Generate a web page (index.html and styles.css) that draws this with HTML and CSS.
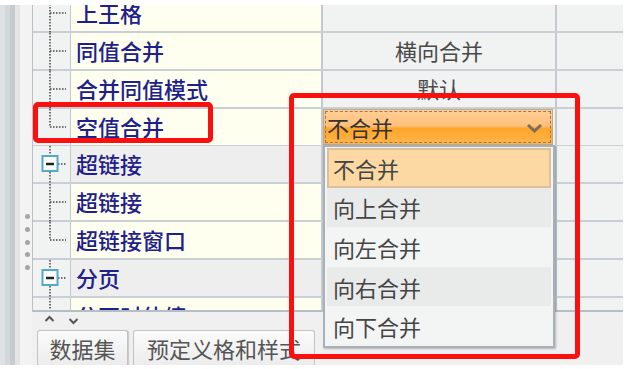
FILE: index.html
```html
<!DOCTYPE html>
<html>
<head>
	<meta charset="UTF-8">
	<title>单元格属性</title>
	<link rel="stylesheet" href="styles.css">
</head>
<body>
	<div class="app">
		<div class="rail">
			<span class="grip"></span>
			<span class="grip"></span>
			<span class="grip"></span>
			<span class="grip"></span>
			<span class="grip"></span>
		</div>
		<div class="main">
			<div class="grid">
				<div class="rows">
					<div class="row">
						<div class="tree"><svg width="37" height="36"><path class="dot" d="M17 0V38M17 18H33"/></svg></div>
						<div class="label">上王格</div>
						<div class="value"></div>
						<div class="extra"></div>
					</div>
					<div class="row">
						<div class="tree"><svg width="37" height="36"><path class="dot" d="M17 0V38M17 18H33"/></svg></div>
						<div class="label">同值合并</div>
						<div class="value">横向合并</div>
						<div class="extra"></div>
					</div>
					<div class="row">
						<div class="tree"><svg width="37" height="36"><path class="dot" d="M17 0V38M17 18H33"/></svg></div>
						<div class="label">合并同值模式</div>
						<div class="value">默认</div>
						<div class="extra"></div>
					</div>
					<div class="row">
						<div class="tree"><svg width="37" height="36"><path class="dot" d="M17 0V18M17 18H33"/></svg></div>
						<div class="label">空值合并</div>
						<div class="value">
							<div class="combo">
								<div class="combo-in">
									<span>不合并</span>
									<svg width="17" height="10"><path d="M2 2L8.5 8L15 2" fill="none" stroke="#7b6d5d" stroke-width="3"/></svg>
								</div>
							</div>
						</div>
						<div class="extra"></div>
					</div>
					<div class="row group">
						<div class="tree"><svg width="37" height="36"><path class="dot" d="M17 0V10M17 26V38M25 18H33"/><rect class="box" x="9.5" y="10" width="15" height="15"/><path d="M13 18H21" stroke="#222" stroke-width="2.5"/></svg></div>
						<div class="label">超链接</div>
						<div class="value"></div>
						<div class="extra"></div>
					</div>
					<div class="row">
						<div class="tree"><svg width="37" height="36"><path class="dot" d="M17 0V38M17 18H33"/></svg></div>
						<div class="label">超链接</div>
						<div class="value"></div>
						<div class="extra"></div>
					</div>
					<div class="row">
						<div class="tree"><svg width="37" height="36"><path class="dot" d="M17 0V18M17 18H33"/></svg></div>
						<div class="label">超链接窗口</div>
						<div class="value"></div>
						<div class="extra"></div>
					</div>
					<div class="row group">
						<div class="tree"><svg width="37" height="36"><path class="dot" d="M17 0V10M17 26V38M25 18H33"/><rect class="box" x="9.5" y="10" width="15" height="15"/><path d="M13 18H21" stroke="#222" stroke-width="2.5"/></svg></div>
						<div class="label">分页</div>
						<div class="value"></div>
						<div class="extra"></div>
					</div>
					<div class="row">
						<div class="tree"><svg width="37" height="36"><path class="dot" d="M17 0V38"/></svg></div>
						<div class="label">分页时伸缩</div>
						<div class="value"></div>
						<div class="extra"></div>
					</div>
				</div>
			</div>
			<div class="foot">
				<div class="arrows">
					<svg width="11" height="7"><path d="M1.5 6L5.5 2L9.5 6" fill="none" stroke="#555" stroke-width="2"/></svg>
					<svg width="11" height="9" class="down"><path d="M1.5 3L5.5 7L9.5 3" fill="none" stroke="#555" stroke-width="2"/></svg>
				</div>
				<div class="tabs">
					<div class="tab tab-a">数据集</div>
					<div class="tab tab-b">预定义格和样式</div>
				</div>
			</div>
		</div>
	</div>

	<!-- 下拉选项 -->
	<div class="popup">
		<div class="opt sel">不合并</div>
		<div class="opt alt">向上合并</div>
		<div class="opt">向左合并</div>
		<div class="opt alt">向右合并</div>
		<div class="opt">向下合并</div>
	</div>

	<!-- 红框标注 -->
	<div class="mark mark-a"></div>
	<div class="mark mark-b"></div>
</body>
</html>
```

FILE: styles.css
```css
* { box-sizing: border-box; }
body {
	margin: 0;
	background: #fff;
	font-family: "Noto Sans CJK SC", "Noto Sans", sans-serif;
}
.app {
	display: flex;
	width: 623px;
	height: 360px;
	margin-top: 5px;
}
.rail {
	width: 32px;
	flex: none;
	display: flex;
	flex-direction: column;
	align-items: flex-end;
	gap: 7.8px;
	padding: 209px 2.5px 0 0;
	background: linear-gradient(to right,
		#dde1e4 0, #dde1e4 5px,
		#d3d8dc 5px, #d3d8dc 10px,
		#c7cbd0 10px, #c7cbd0 15px,
		#e3e4e6 15px, #e3e4e6 20px,
		#f3f3f3 20px);
}
.grip {
	width: 5px;
	height: 5px;
	border-radius: 50%;
	background: #a6a6a6;
}
.main {
	flex: 1;
	display: flex;
	flex-direction: column;
}
.grid {
	height: 307px;
	flex: none;
	overflow: hidden;
	border-left: 1px solid #b8c0c8;
	border-bottom: 2px solid #b6bec5;
}
.rows { margin-top: -9.8px; }
.row {
	display: grid;
	grid-template-columns: 37px 252px 233px 68px;
	height: 37.8px;
	border-bottom: 2px solid #c8d0d5;
}
.tree { background: #f1f2f2; }
.tree svg { display: block; overflow: visible; }
.dot {
	fill: none;
	stroke: #444;
	stroke-width: 1.5;
	stroke-dasharray: 1.5 1.5;
}
.box {
	fill: #fff;
	stroke: #52aacb;
	stroke-width: 2;
}
.label {
	background: #fffff0;
	border-left: 1px solid #c2cad0;
	padding-left: 5px;
	color: #20208a;
	font-size: 22px;
	font-weight: 500;
	line-height: 35.8px;
	white-space: nowrap;
}
.row.group .label { background: #eeeeee; }
.value {
	background: #f1f2f2;
	border-left: 2px solid #c2cad0;
	text-align: center;
	color: #4a4a4a;
	font-size: 22px;
	line-height: 35.8px;
	white-space: nowrap;
	margin-left: -1px;
}
.extra {
	background: #f1f2f2;
	border-left: 2px solid #c2cad0;
}
.combo {
	height: 100%;
	margin-right: 2px;
	padding: 1px;
	border: 1px solid #c9a77a;
	background: linear-gradient(#ffcf96, #ffc07a 47%, #ffa52a 54%, #ffb44c);
	display: flex;
}
.combo-in {
	flex: 1;
	border: 1px dashed #8d7c64;
	display: flex;
	align-items: center;
	justify-content: space-between;
	padding: 0 7px 0 1px;
	color: #333;
	text-align: left;
	line-height: 1;
}
.combo-in svg { display: block; margin-top: 2px; }
.foot {
	flex: 1;
	background: #f0f0f0;
}
.arrows {
	height: 14px;
	display: flex;
	align-items: flex-start;
	gap: 13px;
	padding: 3px 0 0 12px;
}
.arrows svg { display: block; }
.arrows .down { margin-top: 1px; }
.tabs {
	display: flex;
	gap: 5px;
	margin-top: 4px;
	padding-left: 5px;
}
.tab {
	height: 35px;
	border: 1px solid #c2c2c2;
	border-bottom: none;
	border-radius: 3px 3px 0 0;
	background: linear-gradient(#fbfbfb, #ececec);
	color: #555;
	font-size: 22px;
	display: flex;
	align-items: center;
	justify-content: center;
}
.tab-a { width: 91px; box-shadow: 1px 0 1px #c8c8c8; }
.tab-b { width: 182px; }
.popup {
	position: absolute;
	left: 323px;
	top: 145px;
	width: 232px;
	height: 203px;
	border: 2px solid #a9b1b8;
	background: #f3f4f4;
	box-shadow: 1px 1px 2px rgba(0, 0, 0, 0.25);
	padding: 1px 2px;
	display: flex;
	flex-direction: column;
}
.opt {
	height: 39.6px;
	flex: none;
	display: flex;
	align-items: center;
	padding-left: 6px;
	font-size: 22px;
	color: #444;
}
.opt.sel {
	background: #fcd9a2;
	border: 2px solid #dcc09c;
	padding-left: 4px;
}
.opt.alt { background: #e9ebeb; }
.mark {
	position: absolute;
	border: 5px solid #fb1010;
	border-radius: 5px;
}
.mark-a { left: 33px; top: 102px; width: 180px; height: 41px; }
.mark-b { left: 289px; top: 93px; width: 291px; height: 266px; }
```
